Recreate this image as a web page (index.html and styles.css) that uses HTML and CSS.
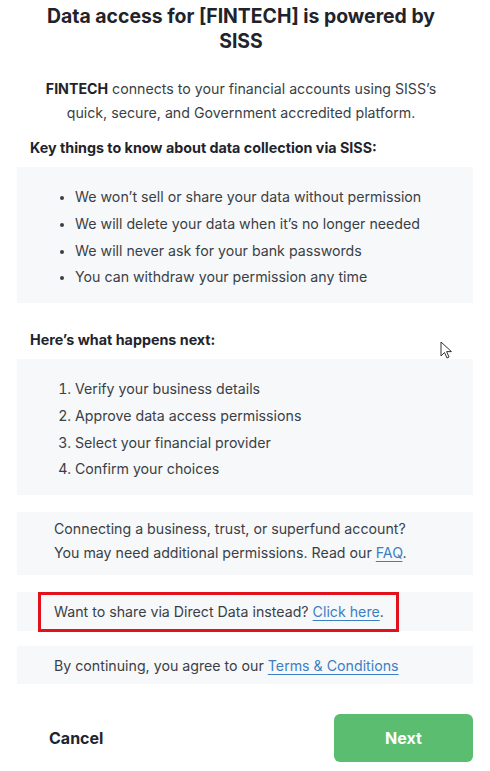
FILE: index.html
```html
<!DOCTYPE html>
<html lang="en">
<head>
<meta charset="utf-8">
<title>Data access</title>
<link rel="stylesheet" href="styles.css">
</head>
<body>
<div class="page">
  <h1 class="title">Data access for [FINTECH] is powered by SISS</h1>
  <p class="intro"><strong>FINTECH</strong> connects to your financial accounts using SISS’s quick, secure, and Government accredited platform.</p>

  <h2 class="section-head">Key things to know about data collection via SISS:</h2>
  <div class="panel panel-list">
    <ul class="bullets">
      <li>We won’t sell or share your data without permission</li>
      <li>We will delete your data when it’s no longer needed</li>
      <li>We will never ask for your bank passwords</li>
      <li>You can withdraw your permission any time</li>
    </ul>
  </div>

  <h2 class="section-head section-head-2">Here’s what happens next:</h2>
  <div class="panel panel-list panel-steps">
    <ol class="steps">
      <li>Verify your business details</li>
      <li>Approve data access permissions</li>
      <li>Select your financial provider</li>
      <li>Confirm your choices</li>
    </ol>
  </div>

  <div class="panel panel-note">
    <p>Connecting a business, trust, or superfund account?<br>You may need additional permissions. Read our <a href="#">FAQ</a>.</p>
  </div>

  <div class="panel panel-direct">
    <div class="highlight">Want to share via Direct Data instead? <a href="#">Click here</a>.</div>
  </div>

  <div class="panel panel-terms">
    <p>By continuing, you agree to our <a href="#">Terms &amp; Conditions</a></p>
  </div>

  <div class="actions">
    <button class="btn-cancel" type="button">Cancel</button>
    <button class="btn-next" type="button">Next</button>
  </div>

  <svg class="cursor" width="14" height="20" viewBox="0 0 14 20"><path d="M1 1 L1 15 L4.5 11.5 L7 17 L9 16 L6.6 10.6 L11.5 10.6 Z" fill="#fff" stroke="#333" stroke-width="1" stroke-linejoin="round"/></svg>
</div>
</body>
</html>
```
FILE: styles.css
```css
* { box-sizing: border-box; }
html, body { margin: 0; padding: 0; background: #fff; }
body {
  font-family: Inter, "Noto Sans", "Liberation Sans", sans-serif;
  color: #2b2f36;
  width: 490px;
  height: 771px;
  overflow: hidden;
}
.page {
  position: relative;
  padding: 0 17px;
}
.title {
  margin: 0;
  padding: 4px 32px 0 24px;
  font-size: 19.4px;
  line-height: 25px;
  font-weight: 700;
  text-align: center;
  color: #1f242c;
}
.intro {
  margin: 23px 0 0;
  padding: 0 28px 0 20px;
  font-size: 14.2px;
  line-height: 24px;
  text-align: center;
  color: #3a3f46;
}
.intro strong { color: #1f242c; font-weight: 700; }
.section-head {
  margin: 11px 0 0 13px;
  font-size: 14.3px;
  line-height: 24px;
  font-weight: 700;
  color: #1f242c;
}
.section-head-2 { margin-top: 25px; }
.panel {
  background: #f7f8fa;
  margin-top: 7px;
}
.panel-list { padding: 17px 0 18px; height: 136px; }
.panel-steps { margin-top: 7px; }
.bullets, .steps {
  margin: 0;
  padding: 0 0 0 58px;
  font-size: 14.2px;
  line-height: 26.8px;
  color: #3a3f46;
}
.bullets li::marker { font-size: 13px; }
.panel-note {
  margin-top: 17px;
  height: 63px;
  padding: 5px 0 0 37px;
}
.panel-note p, .panel-terms p {
  margin: 0;
  font-size: 14.2px;
  line-height: 24px;
  color: #3a3f46;
}
a {
  color: #3b7fc4;
  text-decoration: underline;
  text-underline-offset: 3px;
  text-decoration-thickness: 1px;
}
.panel-direct {
  margin-top: 17px;
  height: 39px;
  padding: 0 0 0 21px;
}
.highlight {
  width: 361px;
  height: 40px;
  border: 3px solid #e3111b;
  padding: 5px 0 0 13px;
  font-size: 14.2px;
  line-height: 24px;
  color: #3a3f46;
}
.panel-terms {
  margin-top: 15px;
  height: 38px;
  padding: 8px 0 0 37px;
}
.actions {
  display: flex;
  justify-content: space-between;
  align-items: center;
  margin-top: 30px;
  padding-left: 32px;
}
.btn-cancel {
  border: 0;
  background: none;
  padding: 0;
  font-family: inherit;
  font-size: 16px;
  font-weight: 700;
  color: #1f242c;
}
.btn-next {
  width: 139px;
  height: 48px;
  border: 0;
  border-radius: 6px;
  background: #5bbd6f;
  color: #fff;
  font-family: inherit;
  font-size: 16px;
  font-weight: 700;
}
.cursor {
  position: absolute;
  left: 440px;
  top: 341px;
}
```
